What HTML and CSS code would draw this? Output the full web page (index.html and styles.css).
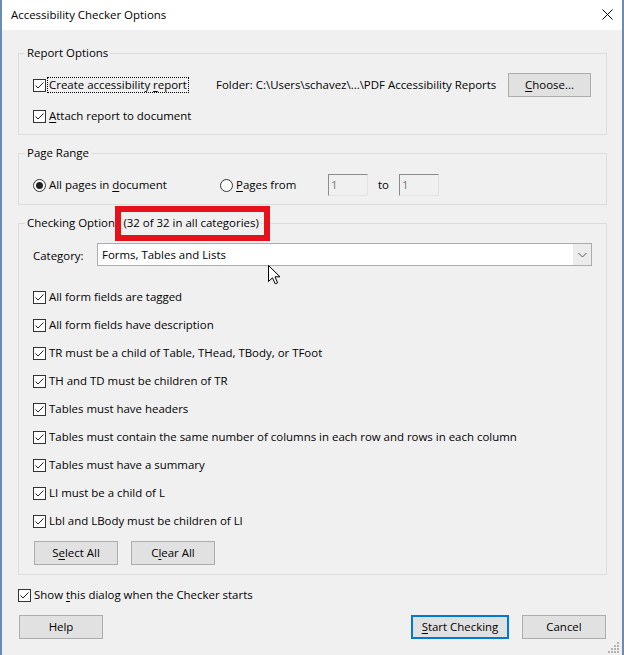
FILE: index.html
```html
<!DOCTYPE html>
<html>
<head>
<meta charset="utf-8">
<link rel="stylesheet" href="styles.css">
</head>
<body>
<div class="window">
  <div class="titlebar">
    <span class="title">Accessibility Checker Options</span>
    <svg class="close" width="11" height="11" viewBox="0 0 11 11"><path d="M0.5 0.5L10.5 10.5M10.5 0.5L0.5 10.5" stroke="#000" stroke-width="1" fill="none"/></svg>
  </div>
  <div class="content">
    <fieldset class="group report">
      <legend>Report Options</legend>
      <div class="row">
        <label class="check w183"><svg class="cb" viewBox="0 0 13 13"><rect x=".5" y=".5" width="12" height="12" fill="#fff" stroke="#333"/><path d="M2.5 6.5L5 9L10.5 3.5" fill="none" stroke="#222"/></svg><span class="focus">Create accessibility <u>r</u>eport</span></label>
        <span class="folder">Folder: C:\Users\schavez\...\PDF Accessibility Reports</span>
        <button class="btn choose"><span><u>C</u>hoose...</span></button>
      </div>
      <div class="row">
        <label class="check"><svg class="cb" viewBox="0 0 13 13"><rect x=".5" y=".5" width="12" height="12" fill="#fff" stroke="#333"/><path d="M2.5 6.5L5 9L10.5 3.5" fill="none" stroke="#222"/></svg><span><u>A</u>ttach report to document</span></label>
      </div>
    </fieldset>

    <fieldset class="group range">
      <legend>Page Range</legend>
      <div class="row">
        <label class="check w187"><svg class="cb" viewBox="0 0 13 13"><circle cx="6.5" cy="6.5" r="6" fill="#fff" stroke="#333"/><circle cx="6.5" cy="6.5" r="3.5" fill="#222"/></svg><span>All pages in <u>d</u>ocument</span></label>
        <label class="check w108"><svg class="cb" viewBox="0 0 13 13"><circle cx="6.5" cy="6.5" r="6" fill="#fff" stroke="#333"/></svg><span><u>P</u>ages from</span></label>
        <span class="field">1</span>
        <span class="to">to</span>
        <span class="field">1</span>
      </div>
    </fieldset>

    <fieldset class="group checking">
      <legend class="hl-legend">Checking Options (32 of 32 in all categories)<span class="highlight"></span></legend>
      <div class="row cat-row">
        <span class="cat-label">Cate<u>g</u>ory:</span>
        <div class="combo">
          <span class="combo-text">Forms, Tables and Lists</span>
          <span class="combo-arrow"><svg width="9" height="6" viewBox="0 0 9 6"><path d="M0.5 1L4.5 5L8.5 1" fill="none" stroke="#5a5a5a"/></svg></span>
        </div>
      </div>
      <div class="checklist">
        <label class="check"><svg class="cb" viewBox="0 0 13 13"><rect x=".5" y=".5" width="12" height="12" fill="#fff" stroke="#333"/><path d="M2.5 6.5L5 9L10.5 3.5" fill="none" stroke="#222"/></svg><span>All form fields are tagged</span></label>
        <label class="check"><svg class="cb" viewBox="0 0 13 13"><rect x=".5" y=".5" width="12" height="12" fill="#fff" stroke="#333"/><path d="M2.5 6.5L5 9L10.5 3.5" fill="none" stroke="#222"/></svg><span>All form fields have description</span></label>
        <label class="check"><svg class="cb" viewBox="0 0 13 13"><rect x=".5" y=".5" width="12" height="12" fill="#fff" stroke="#333"/><path d="M2.5 6.5L5 9L10.5 3.5" fill="none" stroke="#222"/></svg><span>TR must be a child of Table, THead, TBody, or TFoot</span></label>
        <label class="check"><svg class="cb" viewBox="0 0 13 13"><rect x=".5" y=".5" width="12" height="12" fill="#fff" stroke="#333"/><path d="M2.5 6.5L5 9L10.5 3.5" fill="none" stroke="#222"/></svg><span>TH and TD must be children of TR</span></label>
        <label class="check"><svg class="cb" viewBox="0 0 13 13"><rect x=".5" y=".5" width="12" height="12" fill="#fff" stroke="#333"/><path d="M2.5 6.5L5 9L10.5 3.5" fill="none" stroke="#222"/></svg><span>Tables must have headers</span></label>
        <label class="check"><svg class="cb" viewBox="0 0 13 13"><rect x=".5" y=".5" width="12" height="12" fill="#fff" stroke="#333"/><path d="M2.5 6.5L5 9L10.5 3.5" fill="none" stroke="#222"/></svg><span>Tables must contain the same number of columns in each row and rows in each column</span></label>
        <label class="check"><svg class="cb" viewBox="0 0 13 13"><rect x=".5" y=".5" width="12" height="12" fill="#fff" stroke="#333"/><path d="M2.5 6.5L5 9L10.5 3.5" fill="none" stroke="#222"/></svg><span>Tables must have a summary</span></label>
        <label class="check"><svg class="cb" viewBox="0 0 13 13"><rect x=".5" y=".5" width="12" height="12" fill="#fff" stroke="#333"/><path d="M2.5 6.5L5 9L10.5 3.5" fill="none" stroke="#222"/></svg><span>LI must be a child of L</span></label>
        <label class="check"><svg class="cb" viewBox="0 0 13 13"><rect x=".5" y=".5" width="12" height="12" fill="#fff" stroke="#333"/><path d="M2.5 6.5L5 9L10.5 3.5" fill="none" stroke="#222"/></svg><span>Lbl and LBody must be children of LI</span></label>
      </div>
      <div class="actions">
        <button class="btn"><span>S<u>e</u>lect All</span></button>
        <button class="btn"><span>C<u>l</u>ear All</span></button>
      </div>
    </fieldset>

    <label class="check show-row"><svg class="cb" viewBox="0 0 13 13"><rect x=".5" y=".5" width="12" height="12" fill="#fff" stroke="#333"/><path d="M2.5 6.5L5 9L10.5 3.5" fill="none" stroke="#222"/></svg><span>Show <u>t</u>his dialog when the Checker starts</span></label>

    <div class="footer">
      <button class="btn help"><span>Help</span></button>
      <div class="footer-right">
        <button class="btn primary"><span><u>S</u>tart Checking</span></button>
        <button class="btn"><span>Cancel</span></button>
      </div>
    </div>
  </div>

  <svg class="cursor" width="13" height="20" viewBox="0 0 13 20"><path d="M0.5 0.5L0.5 16.5L4.5 12.8L7.2 18.8L9.6 17.8L7 11.8L12 11.8Z" fill="#fff" stroke="#000" stroke-width="1" stroke-linejoin="miter"/></svg>
  <svg class="grip" width="12" height="12" viewBox="0 0 12 12"><g fill="#b4b4b4"><rect x="9" y="0" width="2" height="2"/><rect x="6" y="3" width="2" height="2"/><rect x="9" y="3" width="2" height="2"/><rect x="3" y="6" width="2" height="2"/><rect x="6" y="6" width="2" height="2"/><rect x="9" y="6" width="2" height="2"/><rect x="0" y="9" width="2" height="2"/><rect x="3" y="9" width="2" height="2"/><rect x="6" y="9" width="2" height="2"/><rect x="9" y="9" width="2" height="2"/></g></svg>
</div>
</body>
</html>
```

FILE: styles.css
```css
html, body {
  margin: 0;
  padding: 0;
  background: #f0f0f0;
}

body {
  font-family: "Open Sans", "Noto Sans", sans-serif;
  font-size: 11.45px;
  line-height: 16px;
  color: #000;
}

u {
  text-decoration: underline;
  text-decoration-thickness: 1px;
  text-underline-offset: 2px;
}

.window {
  position: relative;
  width: 624px;
  height: 655px;
  box-sizing: border-box;
  border-left: 2px solid #6a8bb4;
  border-right: 2px solid #6a8bb4;
  background: #f0f0f0;
  display: flex;
  flex-direction: column;
  overflow: hidden;
}

.titlebar {
  height: 30px;
  flex: none;
  background: #fff;
  display: flex;
  align-items: center;
  justify-content: space-between;
  padding: 0 9px 0 9px;
}

.close {
  display: block;
  margin-top: -1px;
}

.content {
  padding: 15px 15px 0 16px;
  display: flex;
  flex-direction: column;
}

.group {
  margin: 0;
  min-width: 0;
  border: 1px solid #dcdcdc;
  padding: 12px 15px 6px 14px;
}

.group legend {
  margin-left: -8px;
  padding: 0 2px;
  line-height: 16px;
}

.range,
.checking {
  margin-top: 10px;
}

.range {
  padding-bottom: 7px;
}

.checking {
  padding-bottom: 9px;
}

.row {
  display: flex;
  align-items: center;
  height: 24px;
}

.report .row + .row {
  margin-top: 7px;
}

.check {
  display: flex;
  align-items: center;
  gap: 3px;
  white-space: nowrap;
}

.cb {
  flex: none;
  width: 13px;
  height: 13px;
  display: block;
}

.w183 { width: 183px; flex: none; }
.w187 { width: 187px; flex: none; }
.w108 { width: 108px; flex: none; }

.focus {
  display: inline-block;
  line-height: 13px;
  padding: 0 1px 1px 1px;
  margin-left: -1px;
  outline: 1px dotted #000;
}

.folder {
  flex: none;
}

.btn {
  flex: none;
  width: 84px;
  height: 24px;
  box-sizing: border-box;
  border: 1px solid #adadad;
  background: #e1e1e1;
  font: inherit;
  color: #000;
  padding: 0;
  margin: 0;
  display: flex;
  align-items: center;
  justify-content: center;
}

.choose {
  width: 83px;
  margin-left: auto;
}

.field {
  flex: none;
  width: 40px;
  height: 22px;
  box-sizing: border-box;
  border-top: 1px solid #8c8c8c;
  border-left: 1px solid #8c8c8c;
  border-right: 1px solid #e3e3e3;
  border-bottom: 1px solid #e3e3e3;
  background: #f0f0f0;
  color: #7a7a7a;
  padding-left: 2px;
  line-height: 20px;
  margin-top: -1px;
}

.to {
  margin: 0 10px 0 10px;
}

.hl-legend {
  position: relative;
}

.highlight {
  position: absolute;
  left: 90px;
  top: -9px;
  width: 155px;
  height: 35px;
  box-sizing: border-box;
  border: 6px solid #e8101a;
}

.cat-row {
  height: 23px;
}

.cat-label {
  width: 64px;
  flex: none;
  padding-top: 2px;
}

.combo {
  flex: 1;
  height: 23px;
  box-sizing: border-box;
  border: 1px solid #acacac;
  background: #fff;
  display: flex;
  align-items: center;
  margin-right: -1px;
}

.combo-text {
  flex: 1;
  padding-left: 4px;
}

.combo-arrow {
  width: 18px;
  align-self: stretch;
  background: #ececec;
  display: flex;
  align-items: center;
  justify-content: center;
}

.combo-arrow svg {
  display: block;
}

.checklist {
  margin-top: 17px;
  display: flex;
  flex-direction: column;
}

.checklist .check {
  height: 28px;
}

.actions {
  margin-top: 6px;
  display: flex;
  gap: 13px;
  padding-left: 1px;
}

.show-row {
  margin-top: 12px;
  height: 16px;
}

.footer {
  margin-top: 12px;
  display: flex;
  justify-content: space-between;
  padding: 0 1px 0 1px;
}

.footer-right {
  display: flex;
  gap: 13px;
}

.primary {
  width: 98px;
  border: 2px solid #0078d7;
}

.cursor {
  position: absolute;
  left: 266px;
  top: 265px;
}

.grip {
  position: absolute;
  right: 2px;
  bottom: 1px;
}
```
